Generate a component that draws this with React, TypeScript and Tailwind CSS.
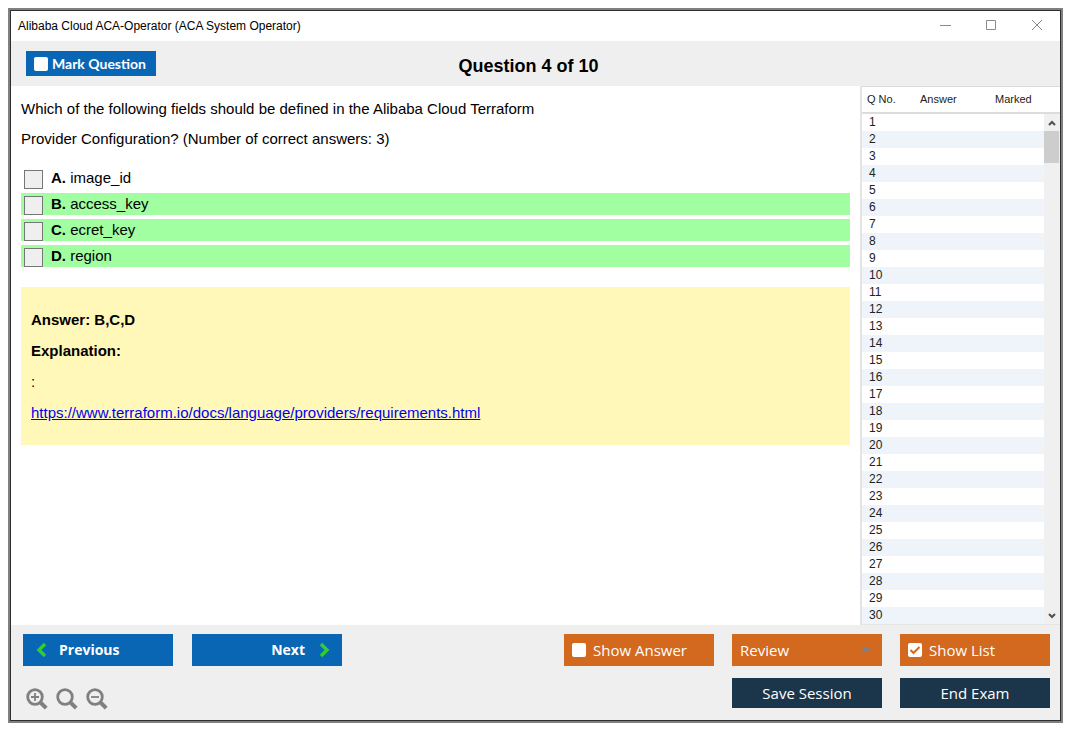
import { useState } from 'react';
import type { ReactNode } from 'react';

const options = [
  { letter: 'A', text: 'image_id', correct: false },
  { letter: 'B', text: 'access_key', correct: true },
  { letter: 'C', text: 'ecret_key', correct: true },
  { letter: 'D', text: 'region', correct: true },
];

const questionNumbers = Array.from({ length: 30 }, (_, i) => i + 1);

function TitleBar() {
  return (
    <div className="flex h-[30px] items-center justify-between bg-white pl-[7px] pr-[17px]">
      <span className="text-xs">Alibaba Cloud ACA-Operator (ACA System Operator)</span>
      <div className="flex gap-[34px] text-[#8a8a8a]">
        <button type="button" aria-label="Minimize">
          <svg width="12" height="12" viewBox="0 0 12 12" fill="none" stroke="currentColor">
            <path d="M1 5.5h11" />
          </svg>
        </button>
        <button type="button" aria-label="Maximize">
          <svg width="12" height="12" viewBox="0 0 12 12" fill="none" stroke="currentColor">
            <path d="M1.5 0.5h9v9h-9z" />
          </svg>
        </button>
        <button type="button" aria-label="Close">
          <svg width="12" height="12" viewBox="0 0 12 12" fill="none" stroke="currentColor">
            <path d="M1 0l10 10M11 0L1 10" />
          </svg>
        </button>
      </div>
    </div>
  );
}

function CheckButton({ label, className, defaultChecked = false }: { label: string; className: string; defaultChecked?: boolean }) {
  const [checked, setChecked] = useState(defaultChecked);

  return (
    <label className={`flex items-center text-white ${className}`}>
      <span className="grid">
        <input
          type="checkbox"
          checked={checked}
          onChange={(e) => setChecked(e.target.checked)}
          className="col-start-1 row-start-1 size-[14px] appearance-none rounded-xs bg-white"
        />
        {checked && (
          <svg className="pointer-events-none col-start-1 row-start-1" width="14" height="14" viewBox="0 0 14 14" fill="none" stroke="#d2691e" strokeWidth="2">
            <path d="M2.5 7l3 3L11.5 4" />
          </svg>
        )}
      </span>
      {label}
    </label>
  );
}

function ZoomButton({ label, children }: { label: string; children?: ReactNode }) {
  return (
    <button type="button" aria-label={label} className="text-[#808080]">
      <svg width="22" height="22" viewBox="0 0 22 22" fill="none" stroke="currentColor">
        <circle cx="9" cy="9" r="7.3" strokeWidth="2.8" />
        <path d="M14 14l6.2 6.2" strokeWidth="4" />
        {children}
      </svg>
    </button>
  );
}

function QuestionList() {
  return (
    <aside className="flex w-[200px] shrink-0 border-b border-l-2 border-[#e4e4e4] bg-white text-[#222]">
      <table className="flex-1 table-fixed border-collapse text-left text-xs">
        <thead>
          <tr className="h-[26px] border-t border-b-2 border-[#dcdcdc] text-[11px]">
            <th className="w-[54px] pl-[5px] font-normal">Q No.</th>
            <th className="w-[75px] pl-1 font-normal">Answer</th>
            <th className="pl-1 font-normal">Marked</th>
          </tr>
        </thead>
        <tbody>
          {questionNumbers.map((n) => (
            <tr key={n} className="h-[17px] odd:bg-white even:bg-[#eef4f9]">
              <td className="pl-[7px] leading-[17px]">{n}</td>
              <td />
              <td />
            </tr>
          ))}
        </tbody>
      </table>
      <div className="flex w-4 flex-col">
        <div className="h-[28px] border-t border-b-2 border-[#dcdcdc]" />
        <div className="flex flex-1 flex-col justify-between bg-[#f0f0f0] text-[#505050]">
          <div>
            <button type="button" aria-label="Scroll up" className="flex h-[17px] w-full items-center justify-center">
              <svg width="8" height="6" viewBox="0 0 8 6" fill="none" stroke="currentColor" strokeWidth="2">
                <path d="M1 5l3-3 3 3" />
              </svg>
            </button>
            <div className="mr-px h-8 bg-[#cdcdcd]" />
          </div>
          <button type="button" aria-label="Scroll down" className="flex h-[17px] w-full items-center justify-center">
            <svg width="8" height="6" viewBox="0 0 8 6" fill="none" stroke="currentColor" strokeWidth="2">
              <path d="M1 1l3 3 3-3" />
            </svg>
          </button>
        </div>
      </div>
    </aside>
  );
}

export default function App() {
  return (
    <div className="flex min-h-screen flex-col bg-white pt-2 pr-3 pb-3 pl-2 font-['Liberation_Sans',Arial,sans-serif] text-black">
      <div className="flex flex-1 flex-col border-2 border-[#808080]">
        <div className="flex flex-1 flex-col border border-[#2e2e2e] bg-[#efefef]">
          <TitleBar />

          <header className="grid h-[45px] grid-cols-[1fr_auto_1fr] items-center pr-[29px] pl-[15px]">
            <CheckButton
              label="Mark Question"
              className="h-[25px] w-[130px] gap-1 justify-self-start bg-[#0866b5] pl-2 font-[Lato,sans-serif] text-sm font-bold"
            />
            <h1 className="pt-1 text-lg font-bold">Question 4 of 10</h1>
          </header>

          <div className="flex flex-1">
            <main className="flex-1 bg-white px-[10px] pt-2 text-[15px]">
              <p className="leading-[30px]">
                Which of the following fields should be defined in the Alibaba Cloud Terraform
                <br />
                Provider Configuration? (Number of correct answers: 3)
              </p>

              <div className="mt-[13px] flex flex-col gap-1">
                {options.map((o) => (
                  <label key={o.letter} className={`flex h-[22px] gap-2 pl-[3px] ${o.correct ? 'bg-[#a1ffa1]' : ''}`}>
                    <input type="checkbox" className="size-[19px] appearance-none self-end border border-[#767676] bg-[#efefef] checked:bg-[#767676]" />
                    <span className="leading-[22px]">
                      <b>{o.letter}.</b> {o.text}
                    </span>
                  </label>
                ))}
              </div>

              <section className="mt-5 bg-[#fff8b9] px-[10px] pt-[17px] pb-[17px] leading-[31px]">
                <p className="font-bold">Answer: B,C,D</p>
                <p className="font-bold">Explanation:</p>
                <p>:</p>
                <a href="https://www.terraform.io/docs/language/providers/requirements.html" className="text-[#0000ee] underline">
                  https://www.terraform.io/docs/language/providers/requirements.html
                </a>
              </section>
            </main>
            <QuestionList />
          </div>

          <footer className="flex justify-between pt-[9px] pr-[10px] pb-[10px] pl-3 font-['Open_Sans',sans-serif] text-[15px] text-white">
            <div className="flex flex-col gap-[22px]">
              <div className="flex gap-[19px] text-sm font-bold">
                <button type="button" className="flex h-8 w-[150px] items-center gap-3 bg-[#0866b5] pl-[13px]">
                  <svg width="11" height="16" viewBox="0 0 11 16" fill="none" stroke="#32cd32" strokeWidth="3.4">
                    <path d="M9 2L3 8l6 6" />
                  </svg>
                  Previous
                </button>
                <button type="button" className="flex h-8 w-[150px] items-center justify-end gap-[14px] bg-[#0866b5] pr-3">
                  Next
                  <svg width="11" height="16" viewBox="0 0 11 16" fill="none" stroke="#32cd32" strokeWidth="3.4">
                    <path d="M2 2l6 6-6 6" />
                  </svg>
                </button>
              </div>
              <div className="flex gap-2 pl-[3px]">
                <ZoomButton label="Zoom in">
                  <path d="M5 9h8M9 5v8" strokeWidth="1.8" />
                </ZoomButton>
                <ZoomButton label="Reset zoom" />
                <ZoomButton label="Zoom out">
                  <path d="M5 9h8" strokeWidth="1.8" />
                </ZoomButton>
              </div>
            </div>

            <div className="grid grid-cols-[150px_150px_150px] content-start gap-x-[18px] gap-y-3">
              <CheckButton label="Show Answer" className="h-8 gap-[7px] bg-[#d2691e] pl-2" />
              <div className="relative">
                <select aria-label="Review" className="h-8 w-full appearance-none bg-[#d2691e] pl-2">
                  <option>Review</option>
                </select>
                <svg className="pointer-events-none absolute top-3 right-[10px]" width="12" height="6" viewBox="0 0 12 6">
                  <path d="M0 6l6-6 6 6z" fill="#808080" />
                </svg>
              </div>
              <CheckButton label="Show List" className="h-8 gap-[7px] bg-[#d2691e] pl-2" defaultChecked />
              <button type="button" className="col-start-2 h-[30px] bg-[#1b354a]">
                Save Session
              </button>
              <button type="button" className="h-[30px] bg-[#1b354a]">
                End Exam
              </button>
            </div>
          </footer>
        </div>
      </div>
    </div>
  );
}
